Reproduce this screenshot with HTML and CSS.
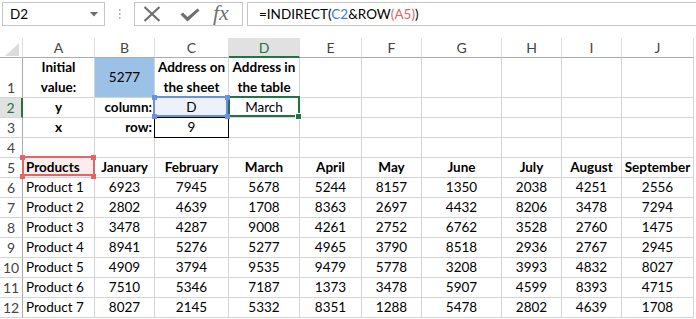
FILE: index.html
```html
<!DOCTYPE html>
<html>
<head>
<meta charset="utf-8">
<link rel="stylesheet" href="styles.css">
</head>
<body>
<div class="bar">
  <div class="namebox"><span>D2</span><svg class="dd" width="8" height="5" viewBox="0 0 8 5"><path d="M0 0H8L4 4.5Z" fill="#6d6d6d"/></svg></div>
  <div class="grip"><svg width="3" height="12" viewBox="0 0 3 12"><rect x="1" y="1" width="1.5" height="2" fill="#b0b0b0"/><rect x="1" y="5" width="1.5" height="2" fill="#b0b0b0"/><rect x="1" y="9" width="1.5" height="2" fill="#b0b0b0"/></svg></div>
  <div class="btns">
    <svg class="ic-x" width="18" height="16" viewBox="0 0 18 16"><path d="M1.5 1L16.5 15M16.5 1L1.5 15" stroke="#6f6f6f" stroke-width="2.2" fill="none"/></svg>
    <svg class="ic-ok" width="20" height="14" viewBox="0 0 20 14"><path d="M0.5 6.5L3 4.5L7.5 9L17.5 0.5L19.5 2.5L7.5 13.5Z" fill="#6f6f6f"/></svg>
    <span class="fx">fx</span>
  </div>
  <div class="formula">=INDIRECT(<span class="ref-b">C2</span>&amp;ROW<span class="ref-r">(A5)</span>)</div>
</div>
<div class="sheet">
  <div class="c corner"><svg width="14" height="13" viewBox="0 0 14 13"><path d="M14 0V13H0Z" fill="#dcdcdc"/></svg></div>
  <div class="c ch">A</div><div class="c ch">B</div><div class="c ch">C</div><div class="c ch chsel">D</div><div class="c ch">E</div><div class="c ch">F</div><div class="c ch">G</div><div class="c ch">H</div><div class="c ch">I</div><div class="c ch">J</div>

  <div class="c rh">1</div>
  <div class="c b wrap">Initial<br>value:</div>
  <div class="c blue mid">5277</div>
  <div class="c b wrap">Address on<br>the sheet</div>
  <div class="c b wrap">Address in<br>the table</div>
  <div class="c"></div><div class="c"></div><div class="c"></div><div class="c"></div><div class="c"></div><div class="c"></div>

  <div class="c rh rhsel">2</div>
  <div class="c b">y</div>
  <div class="c b r">column:</div>
  <div class="c selc">D<i class="h tl"></i><i class="h tr"></i><i class="h bl"></i><i class="h br"></i></div>
  <div class="c act">March<i class="fill"></i></div>
  <div class="c"></div><div class="c"></div><div class="c"></div><div class="c"></div><div class="c"></div><div class="c"></div>

  <div class="c rh">3</div>
  <div class="c b">x</div>
  <div class="c b r">row:</div>
  <div class="c boxed">9</div>
  <div class="c"></div><div class="c"></div><div class="c"></div><div class="c"></div><div class="c"></div><div class="c"></div><div class="c"></div>

  <div class="c rh">4</div>
  <div class="c"></div><div class="c"></div><div class="c"></div><div class="c"></div><div class="c"></div><div class="c"></div><div class="c"></div><div class="c"></div><div class="c"></div><div class="c"></div>

  <div class="c rh">5</div>
  <div class="c b l selr">Products<i class="h tl"></i><i class="h tr"></i><i class="h bl"></i><i class="h br"></i></div>
  <div class="c b">January</div><div class="c b">February</div><div class="c b">March</div><div class="c b">April</div><div class="c b">May</div><div class="c b">June</div><div class="c b">July</div><div class="c b">August</div><div class="c b">September</div>

  <div class="c rh">6</div>
  <div class="c l">Product 1</div><div class="c">6923</div><div class="c">7945</div><div class="c">5678</div><div class="c">5244</div><div class="c">8157</div><div class="c">1350</div><div class="c">2038</div><div class="c">4251</div><div class="c">2556</div>

  <div class="c rh">7</div>
  <div class="c l">Product 2</div><div class="c">2802</div><div class="c">4639</div><div class="c">1708</div><div class="c">8363</div><div class="c">2697</div><div class="c">4432</div><div class="c">8206</div><div class="c">3478</div><div class="c">7294</div>

  <div class="c rh">8</div>
  <div class="c l">Product 3</div><div class="c">3478</div><div class="c">4287</div><div class="c">9008</div><div class="c">4261</div><div class="c">2752</div><div class="c">6762</div><div class="c">3528</div><div class="c">2760</div><div class="c">1475</div>

  <div class="c rh">9</div>
  <div class="c l">Product 4</div><div class="c">8941</div><div class="c">5276</div><div class="c">5277</div><div class="c">4965</div><div class="c">3790</div><div class="c">8518</div><div class="c">2936</div><div class="c">2767</div><div class="c">2945</div>

  <div class="c rh">10</div>
  <div class="c l">Product 5</div><div class="c">4909</div><div class="c">3794</div><div class="c">9535</div><div class="c">9479</div><div class="c">5778</div><div class="c">3208</div><div class="c">3993</div><div class="c">4832</div><div class="c">8027</div>

  <div class="c rh">11</div>
  <div class="c l">Product 6</div><div class="c">7510</div><div class="c">5346</div><div class="c">7187</div><div class="c">1373</div><div class="c">3478</div><div class="c">5907</div><div class="c">4599</div><div class="c">8393</div><div class="c">4715</div>

  <div class="c rh">12</div>
  <div class="c l">Product 7</div><div class="c">8027</div><div class="c">2145</div><div class="c">5332</div><div class="c">8351</div><div class="c">1288</div><div class="c">5478</div><div class="c">2802</div><div class="c">4639</div><div class="c">1708</div>
</div>
</body>
</html>
```
FILE: styles.css
```css
html, body {
  margin: 0;
  padding: 0;
  background: #fff;
  overflow: hidden;
}
body {
  font-family: Lato, "Liberation Sans", sans-serif;
  font-size: 13.5px;
  color: #000;
}
.bar {
  height: 38px;
  display: flex;
  align-items: flex-start;
  padding: 2px 0 0 2px;
  box-sizing: border-box;
}
.namebox {
  width: 103px;
  height: 24px;
  box-sizing: border-box;
  border: 1px solid #c6c6c6;
  display: flex;
  align-items: center;
  justify-content: space-between;
  padding: 0 6px 0 7px;
}
.grip {
  width: 29px;
  height: 24px;
  display: flex;
  align-items: center;
  justify-content: center;
}
.btns {
  width: 109px;
  height: 24px;
  box-sizing: border-box;
  border: 1px solid #c6c6c6;
  display: flex;
  align-items: center;
  padding-left: 8px;
}
.ic-x { margin-right: 19px; }
.ic-ok { margin-right: 13px; margin-top: 1px; }
.fx {
  font-family: "Liberation Serif", "DejaVu Serif", serif;
  font-style: italic;
  font-size: 22px;
  color: #6f6f6f;
  line-height: 20px;
  margin-top: -2px;
}
.formula {
  margin-left: 4px;
  flex: 1;
  height: 24px;
  box-sizing: border-box;
  border: 1px solid #c6c6c6;
  border-right: none;
  padding-left: 11px;
  line-height: 22px;
  white-space: nowrap;
}
.ref-b { color: #3d7bd6; }
.ref-r { color: #e06464; }

.sheet {
  display: grid;
  grid-template-columns: 23px 72px 60px 74px 71px 62px 60px 80px 60px 60px 72px;
  grid-template-rows: 20px 40px repeat(11, 20px);
}
.c {
  box-sizing: border-box;
  border-right: 1px solid #d4d4d4;
  border-bottom: 1px solid #d4d4d4;
  display: flex;
  align-items: flex-end;
  justify-content: center;
  padding: 0 2px;
  line-height: 19px;
  white-space: nowrap;
  overflow: visible;
}
.b { font-weight: 700; }
.l { justify-content: flex-start; padding-left: 3px; }
.r { justify-content: flex-end; }
.mid { align-items: center; }
.wrap {
  text-align: center;
  line-height: 20px;
  padding: 0;
}
.corner {
  border-right: 1px solid #dedede;
  border-bottom: 1px solid #ababab;
  justify-content: flex-end;
  align-items: flex-end;
  padding: 0 3px 1px 0;
}
.ch {
  color: #444;
  border-right: 1px solid #dedede;
  border-bottom: 1px solid #ababab;
  align-items: center;
  font-size: 14px;
}
.chsel {
  background: #e1e1e1;
  color: #217346;
  border-bottom: 2px solid #217346;
}
.rh {
  color: #444;
  border-right: 1px solid #ababab;
  padding: 0;
  font-size: 14px;
}
.rhsel {
  background: #e1e1e1;
  color: #217346;
  border-right: 2px solid #217346;
}
.blue { background: #9bc2e6; }

.selc {
  position: relative;
  background: #ecf1fb;
}
.selc::after {
  content: "";
  position: absolute;
  left: -2px; top: -2px; right: 0; bottom: 0;
  border: 2px solid #6d8fe2;
  z-index: 2;
}
.selc .h { background: #6d8fe2; }
.h {
  position: absolute;
  width: 5px;
  height: 5px;
  z-index: 3;
}
.h.tl { left: -3px; top: -3px; }
.h.tr { right: -2px; top: -3px; }
.h.bl { left: -3px; bottom: -2px; }
.h.br { right: -2px; bottom: -2px; }

.act { position: relative; }
.act::after {
  content: "";
  position: absolute;
  left: -1px; top: -2px; right: -1px; bottom: 0;
  border: 2px solid #217346;
  z-index: 2;
}
.fill {
  position: absolute;
  right: -3px; bottom: -3px;
  width: 5px; height: 5px;
  background: #217346;
  border: 1px solid #fff;
  box-sizing: content-box;
  z-index: 3;
}
.boxed { position: relative; }
.boxed::after {
  content: "";
  position: absolute;
  left: -1px; top: -1px; right: -1px; bottom: -1px;
  border: 1px solid #000;
}
.selr {
  position: relative;
  background: #fcecec;
}
.selr::after {
  content: "";
  position: absolute;
  left: -1px; top: -2px; right: -1px; bottom: 1px;
  border: 2px solid #e26666;
  z-index: 2;
}
.selr .h { background: #e26666; }
```
